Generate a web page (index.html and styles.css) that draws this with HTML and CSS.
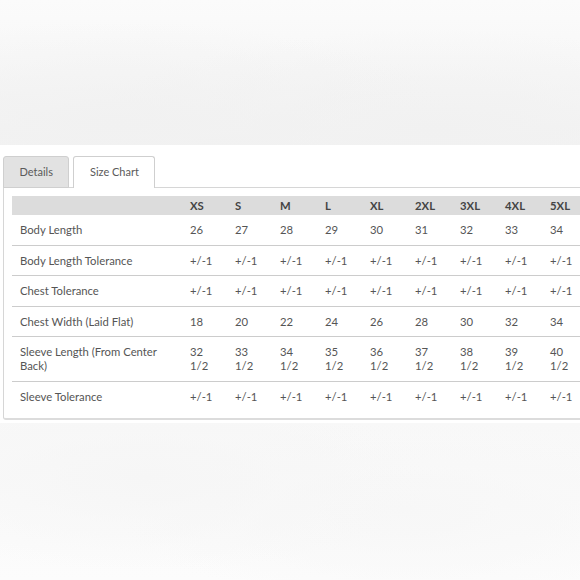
FILE: index.html
```html
<!DOCTYPE html>
<html>
<head>
<meta charset="utf-8">
<link rel="stylesheet" href="styles.css">
</head>
<body>
<div class="page">
  <div class="band band-top"></div>
  <section class="content">
    <div class="tabs">
      <div class="tab">Details</div>
      <div class="tab active">Size Chart</div>
    </div>
    <div class="panel">
      <table class="chart">
        <colgroup>
          <col class="c-label">
          <col class="c-size"><col class="c-size"><col class="c-size">
          <col class="c-size"><col class="c-size"><col class="c-size">
          <col class="c-size"><col class="c-size"><col class="c-size">
        </colgroup>
        <thead>
          <tr><th></th><th>XS</th><th>S</th><th>M</th><th>L</th><th>XL</th><th>2XL</th><th>3XL</th><th>4XL</th><th>5XL</th></tr>
        </thead>
        <tbody>
          <tr><td>Body Length</td><td>26</td><td>27</td><td>28</td><td>29</td><td>30</td><td>31</td><td>32</td><td>33</td><td>34</td></tr>
          <tr><td>Body Length Tolerance</td><td>+/-1</td><td>+/-1</td><td>+/-1</td><td>+/-1</td><td>+/-1</td><td>+/-1</td><td>+/-1</td><td>+/-1</td><td>+/-1</td></tr>
          <tr><td>Chest Tolerance</td><td>+/-1</td><td>+/-1</td><td>+/-1</td><td>+/-1</td><td>+/-1</td><td>+/-1</td><td>+/-1</td><td>+/-1</td><td>+/-1</td></tr>
          <tr><td>Chest Width (Laid Flat)</td><td>18</td><td>20</td><td>22</td><td>24</td><td>26</td><td>28</td><td>30</td><td>32</td><td>34</td></tr>
          <tr><td>Sleeve Length (From Center Back)</td><td>32 1/2</td><td>33 1/2</td><td>34 1/2</td><td>35 1/2</td><td>36 1/2</td><td>37 1/2</td><td>38 1/2</td><td>39 1/2</td><td>40 1/2</td></tr>
          <tr class="last"><td>Sleeve Tolerance</td><td>+/-1</td><td>+/-1</td><td>+/-1</td><td>+/-1</td><td>+/-1</td><td>+/-1</td><td>+/-1</td><td>+/-1</td><td>+/-1</td></tr>
        </tbody>
      </table>
    </div>
  </section>
  <div class="band band-bottom"></div>
</div>
</body>
</html>
```

FILE: styles.css
```css
html, body {
  margin: 0;
  padding: 0;
  background: #ffffff;
  overflow: hidden;
}

.page {
  width: 580px;
  height: 580px;
  display: flex;
  flex-direction: column;
  overflow: hidden;
  font-family: Lato, "Liberation Sans", sans-serif;
  color: #555555;
}

.band {
  flex: none;
}

.band-top {
  height: 145px;
  background:
    radial-gradient(ellipse 60% 70% at 20% 85%, #f1f1f1 0%, rgba(241,241,241,0) 100%),
    radial-gradient(ellipse 60% 70% at 75% 90%, #f1f1f1 0%, rgba(241,241,241,0) 100%),
    linear-gradient(180deg, #fbfbfb 0%, #f3f3f3 100%);
}

.band-bottom {
  flex: 1;
  background:
    radial-gradient(ellipse 50% 60% at 25% 35%, #f6f6f6 0%, rgba(246,246,246,0) 100%),
    radial-gradient(ellipse 50% 60% at 70% 55%, #f7f7f7 0%, rgba(247,247,247,0) 100%),
    linear-gradient(180deg, #f8f8f8 0%, #fcfcfc 100%);
}

.content {
  flex: none;
  height: 278px;
  box-sizing: border-box;
  padding: 11px 0 0 3px;
  background: #ffffff;
}

.tabs {
  display: flex;
  gap: 4px;
  align-items: flex-end;
  position: relative;
  z-index: 1;
  margin-bottom: -1px;
}

.tab {
  font-size: 11px;
  line-height: 14px;
  padding: 8px 15.5px;
  background: #e2e2e2;
  border: 1px solid #cfcfcf;
  border-bottom: none;
  border-radius: 3px 3px 0 0;
  color: #5a5a5a;
}

.tab.active {
  background: #ffffff;
  padding-bottom: 9px;
}

.tabs .tab:first-child {
  border-bottom: 1px solid #cfcfcf;
}

.panel {
  width: 640px;
  border: 1px solid #d6d6d6;
  border-bottom: 2px solid #dcdcdc;
  border-radius: 0 3px 3px 3px;
  padding: 8px 8px 7px 8px;
  background: #ffffff;
}

.chart {
  border-collapse: collapse;
  table-layout: fixed;
  width: 575px;
}

.c-label {
  width: 170px;
}

.c-size {
  width: 45px;
}

.chart th {
  background: #dcdcdc;
  color: #444444;
  font-weight: 700;
  font-size: 11.3px;
  line-height: 15px;
  padding: 2px 8px;
  text-align: left;
}

.chart td {
  font-size: 11.3px;
  line-height: 14px;
  padding: 8px 8px 7.5px 8px;
  text-align: left;
  vertical-align: top;
  border-bottom: 1px solid #cccccc;
  color: #555555;
}

.chart tr.last td {
  border-bottom: none;
}
```
